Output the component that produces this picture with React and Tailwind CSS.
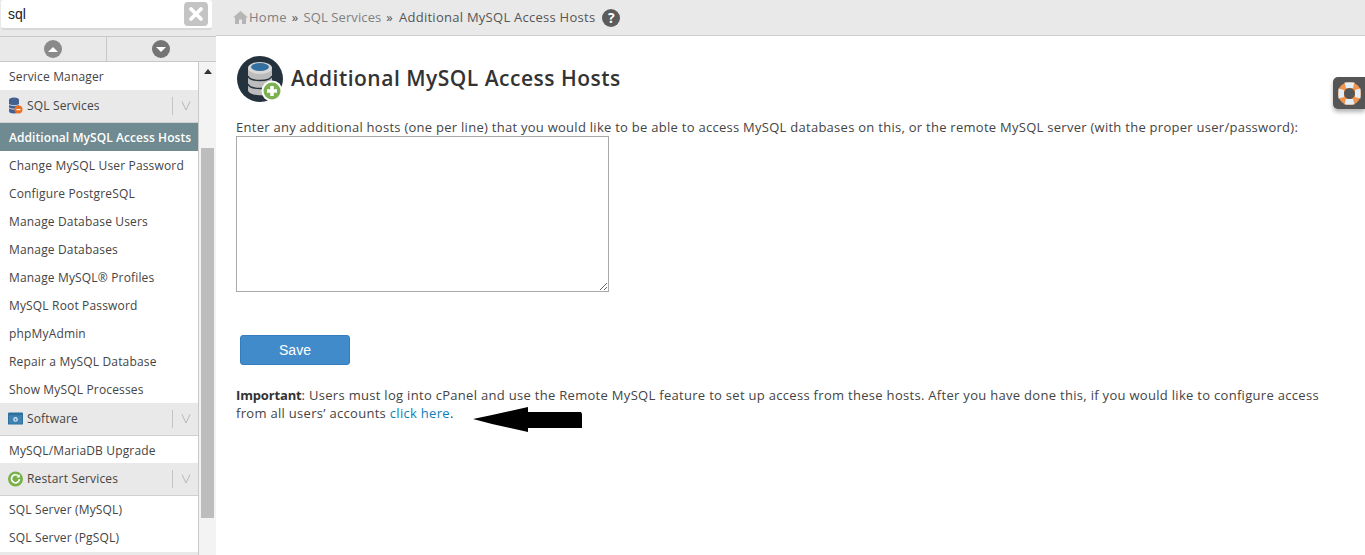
import React from "react";
import { X } from "lucide-react";

const font = "font-['Open_Sans','Noto_Sans',sans-serif]";

const SqlIcon = () => (
  <svg width="15" height="17" viewBox="0 0 15 17">
    <ellipse cx="6" cy="3" rx="5" ry="2.5" fill="#44608f" />
    <rect x="1" y="3" width="10" height="11" fill="#44608f" />
    <ellipse cx="6" cy="14" rx="5" ry="2.5" fill="#44608f" />
    <path d="M1 7.5c2 1.500 8 1.500 10 0M1 11c2 1.500 8 1.500 10 0" stroke="#c6cfdd" fill="none" />
    <circle cx="10.500" cy="12.500" r="4" fill="#ee6f1f" />
    <rect x="8.500" y="12" width="4" height="1.200" fill="#fff" />
  </svg>
);

const SoftwareIcon = () => (
  <svg width="16" height="13" viewBox="0 0 16 13">
    <rect width="16" height="13" rx="1" fill="#2f6f9c" />
    <rect x="1" y="3" width="14" height="9" fill="#3d82b0" />
    <circle cx="8" cy="7.500" r="2.500" fill="#cfe0ea" />
    <circle cx="8" cy="7.500" r="1" fill="#3d82b0" />
  </svg>
);

const RestartIcon = () => (
  <svg width="16" height="16" viewBox="0 0 16 16">
    <circle cx="8" cy="8" r="8" fill="#78b04a" />
    <path d="M11.500 5.200a4.300 4.300 0 1 0 .8 3" stroke="#fff" strokeWidth="1.800" fill="none" />
    <path d="M12.500 3v3.500H9z" fill="#fff" />
  </svg>
);

const Item = ({ label, active, short, flush }) => (
  <div
    className={`${short ? "h-[27px]" : "h-7"} ${flush ? "" : "pt-[2px]"} flex items-center pl-[9px] text-[12px] whitespace-nowrap ${
      active ? "bg-[#6f8a90] text-white font-semibold tracking-[0.07px]" : "bg-white text-[#444] tracking-[0.16px]"
    }`}
  >
    {label}
  </div>
);

const Group = ({ icon, label }) => (
  <div className="h-[33px] flex items-center bg-[#e9e9e9] border-b border-[#d0d0d0] pl-[8px] pb-[1px]">
    <div className="w-[15px] flex justify-center shrink-0">{icon}</div>
    <div className="ml-[4px] flex-1 text-[12px] tracking-[0.16px] text-[#444]">{label}</div>
    <div className="h-[18px] w-[26px] border-l border-[#c4c4c4] flex items-center justify-center">
      <svg width="10" height="11" viewBox="0 0 10 11">
        <path d="M1 1.500L5 10L9 1.500" fill="none" stroke="#b8b8b8" />
      </svg>
    </div>
  </div>
);

const Sidebar = () => (
  <div className="w-[216px] h-[555px] shrink-0 flex flex-col bg-[#f3f3f3] overflow-hidden">
    <div className="h-[36px] bg-[#e9e9e9] pl-[1px] pr-[4px]">
      <div className="h-[30px] bg-white rounded-[3px] border-b-2 border-[#d8d8d8] flex items-center justify-between pl-[7px] pr-[4px]">
        <span className="text-[14px] text-[#222] font-['Liberation_Sans',sans-serif]">sql</span>
        <div className="w-6 h-6 bg-[#c4c4c4] rounded-[4px] flex items-center justify-center">
          <X size={20} strokeWidth={4.500} className="text-white" />
        </div>
      </div>
    </div>
    <div className="h-[26px] flex bg-[#e9e9e9] border-y border-[#c8c8c8]">
      <div className="w-[107px] border-r border-[#c8c8c8] flex items-center justify-center">
        <div className="w-[18px] h-[18px] rounded-full bg-[#8a8a8a] flex items-center justify-center">
          <div className="w-0 h-0 border-x-[5px] border-x-transparent border-b-[5px] border-b-white" />
        </div>
      </div>
      <div className="flex-1 flex items-center justify-center -translate-x-px">
        <div className="w-[18px] h-[18px] rounded-full bg-[#757575] flex items-center justify-center">
          <div className="w-0 h-0 border-x-[5px] border-x-transparent border-t-[5px] border-t-white" />
        </div>
      </div>
    </div>
    <div className="flex flex-1 min-h-0">
      <div className="w-[199px] border-r border-[#c8c8c8] bg-white">
        <Item label="Service Manager" />
        <Group icon={<SqlIcon />} label="SQL Services" />
        <Item label="Additional MySQL Access Hosts" active />
        <Item label="Change MySQL User Password" />
        <Item label="Configure PostgreSQL" />
        <Item label="Manage Database Users" />
        <Item label="Manage Databases" />
        <Item label="Manage MySQL® Profiles" />
        <Item label="MySQL Root Password" />
        <Item label="phpMyAdmin" />
        <Item label="Repair a MySQL Database" />
        <Item label="Show MySQL Processes" />
        <Group icon={<SoftwareIcon />} label="Software" />
        <Item label="MySQL/MariaDB Upgrade" short />
        <Group icon={<RestartIcon />} label="Restart Services" />
        <Item label="SQL Server (MySQL)" flush />
        <Item label="SQL Server (PgSQL)" flush />
        <div className="h-2 bg-[#e9e9e9]" />
      </div>
      <div className="flex-1 flex flex-col items-center pt-[7px]">
        <div className="w-0 h-0 border-x-[4px] border-x-transparent border-b-[5px] border-b-[#333]" />
        <div className="w-[13px] h-[370px] bg-[#bdbdbd] mt-[74px]" />
      </div>
    </div>
  </div>
);

const Breadcrumb = () => (
  <div className="h-[36px] bg-[#e9e9e9] border-b border-[#cfcfcf] flex items-center pl-[17px] text-[13px] tracking-[0.26px] text-[#808080] whitespace-nowrap">
    <svg width="15" height="13" viewBox="0 0 15 13">
      <path d="M7.500 0L15 6.500h-2V13H9V8.500H6V13H2V6.500H0z" fill="#b5b5b5" />
    </svg>
    <span className="ml-[1px]">Home</span>
    <span className="mx-[5px] text-[#555]">»</span>
    <span className="tracking-[0.1px]">SQL Services</span>
    <span className="ml-[5px] mr-[6px] text-[#555]">»</span>
    <span className="text-[#555]">Additional MySQL Access Hosts</span>
    <div className="ml-[7px] w-[18px] h-[18px] rounded-full bg-[#5c5c5c] flex items-center justify-center text-white text-[14px] font-bold tracking-normal">
      ?
    </div>
  </div>
);

const TitleIcon = () => (
  <svg width="47" height="47" viewBox="0 0 47 47" className="shrink-0">
    <circle cx="23" cy="23" r="23" fill="#24323d" />
    <path d="M11 12v22c0 7 24 7 24 0V12z" fill="#bcbcbc" />
    <path d="M11 20c2 6 22 6 24 0M11 28c2 6 22 6 24 0" stroke="#24323d" strokeWidth="1.500" fill="none" />
    <ellipse cx="23" cy="12" rx="12" ry="6" fill="#d9d9d9" />
    <ellipse cx="23" cy="11" rx="9" ry="4" fill="#33709f" />
    <circle cx="35" cy="35" r="10.500" fill="#fff" />
    <circle cx="35" cy="35" r="8.500" fill="#7cb151" />
    <path d="M35 30v10M30 35h10" stroke="#fff" strokeWidth="3.500" />
  </svg>
);

const Arrow = () => (
  <svg width="111" height="26" viewBox="0 0 111 26" className="absolute left-[472px] top-[407px]">
    <path d="M1 12 L20 8 L56 0 L56 5 L109 5 L110 7 L110 21 L56 21 L56 25 L20 17 Z" fill="#000" />
  </svg>
);

const Lifebuoy = () => (
  <div className="absolute right-0 top-[77px] w-[32px] h-[32px] bg-[#555] rounded-l-[5px] shadow-[0_3px_4px_rgba(0,0,0,0.3)] flex items-center pl-[4px]">
    <svg width="25" height="25" viewBox="0 0 25 25">
      <circle cx="12.500" cy="12.500" r="8.500" fill="none" stroke="#f0954e" strokeWidth="6" />
      <path d="M7.500 1.500h10l-1.500 5.500h-7zM7.500 23.500h10l-1.500-5.500h-7zM1.500 7.500v10l5.500-1.500v-7zM23.500 7.500v10l-5.500-1.500v-7z" fill="#e3eff8" />
    </svg>
  </div>
);

const App = () => (
  <div className={`relative flex w-[1365px] h-[555px] overflow-hidden bg-white ${font}`}>
    <Sidebar />
    <div className="flex-1 flex flex-col min-w-0">
      <Breadcrumb />
      <div className="pl-[20px] pr-[40px] text-[13px] tracking-[0.27px] text-[#444]">
        <div className="flex items-center mt-[20px] pl-[1px]">
          <TitleIcon />
          <h1 className="ml-[7px] text-[21px] font-semibold tracking-[0.5px] text-[#333] -translate-y-px">
            Additional MySQL Access Hosts
          </h1>
        </div>
        <p className="mt-[15px] h-[18px] leading-[18px] whitespace-nowrap">
          Enter any additional hosts (one per line) that you would like to be able to access MySQL databases on this, or the remote MySQL server (with the proper user/password):
        </p>
        <textarea className="block w-[373px] h-[156px] border border-[#aaa] bg-white" />
        <button className="block mt-[43px] ml-[4px] w-[110px] h-[30px] bg-[#428bca] border border-[#357ebd] rounded-[3px] text-white text-[14px] tracking-normal font-['Liberation_Sans',sans-serif]">
          Save
        </button>
        <p className="mt-[21px] leading-[18px] tracking-[0.3px]">
          <strong className="font-bold text-[#333] tracking-[-0.15px]">Important</strong>: Users must log into cPanel and use the Remote MySQL feature to set up access from these hosts. After you have done this, if you would like to configure access from all users’ accounts <a className="text-[#0b7fb8]">click here</a>.
        </p>
      </div>
    </div>
    <Arrow />
    <Lifebuoy />
  </div>
);

export default App;
